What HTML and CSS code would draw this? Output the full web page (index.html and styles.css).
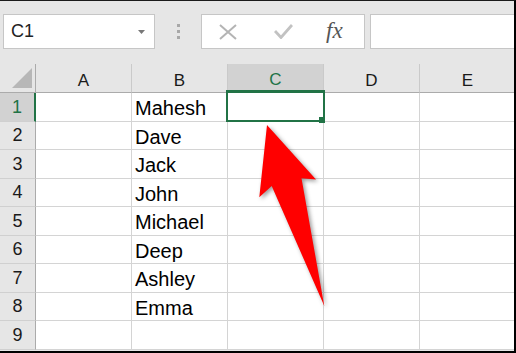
FILE: index.html
```html
<!DOCTYPE html>
<html>
<head>
<meta charset="utf-8">
<link rel="stylesheet" href="styles.css">
</head>
<body>
<div class="frame">
  <div class="toolbar">
    <div class="namebox">
      <span class="ref">C1</span>
      <svg class="caret" width="7" height="4" viewBox="0 0 7 4"><polygon points="0,0 7,0 3.5,4" fill="#777"/></svg>
    </div>
    <div class="grip"><i></i><i></i><i></i></div>
    <div class="fbuttons">
      <svg class="xicon" width="18" height="16" viewBox="0 0 18 16"><path d="M1 1 L17 15 M17 1 L1 15" stroke="#b4b4b4" stroke-width="2" fill="none"/></svg>
      <svg class="check" width="19" height="15" viewBox="0 0 19 15"><path d="M1 7 L7 13.5 L18 1" stroke="#c2c2c2" stroke-width="2.8" fill="none"/></svg>
      <span class="fx">fx</span>
    </div>
    <div class="finput"></div>
  </div>
  <div class="sheet">
    <div class="corner"><svg width="20" height="20" viewBox="0 0 20 20"><polygon points="0,20 20,0 20,20" fill="#b7b7b7"/></svg></div>
    <div class="ch">A</div>
    <div class="ch">B</div>
    <div class="ch sel">C</div>
    <div class="ch">D</div>
    <div class="ch">E</div>

    <div class="rh sel-row">1</div><div class="cell"></div><div class="cell">Mahesh</div><div class="cell c1"><div class="selbox"><span class="handle"></span></div></div><div class="cell"></div><div class="cell"></div>
    <div class="rh">2</div><div class="cell"></div><div class="cell">Dave</div><div class="cell"></div><div class="cell"></div><div class="cell"></div>
    <div class="rh">3</div><div class="cell"></div><div class="cell">Jack</div><div class="cell"></div><div class="cell"></div><div class="cell"></div>
    <div class="rh">4</div><div class="cell"></div><div class="cell">John</div><div class="cell"></div><div class="cell"></div><div class="cell"></div>
    <div class="rh">5</div><div class="cell"></div><div class="cell">Michael</div><div class="cell"></div><div class="cell"></div><div class="cell"></div>
    <div class="rh">6</div><div class="cell"></div><div class="cell">Deep</div><div class="cell"></div><div class="cell"></div><div class="cell"></div>
    <div class="rh">7</div><div class="cell"></div><div class="cell">Ashley</div><div class="cell"></div><div class="cell"></div><div class="cell"></div>
    <div class="rh">8</div><div class="cell"></div><div class="cell">Emma</div><div class="cell"></div><div class="cell"></div><div class="cell"></div>
    <div class="rh">9</div><div class="cell"></div><div class="cell"></div><div class="cell"></div><div class="cell"></div><div class="cell"></div>
  </div>
</div>
<svg class="arrow" width="516" height="353" viewBox="0 0 516 353">
  <polygon points="267,125 316,179.5 301.5,178.3 324.3,306 271.7,186 259.3,197.3" fill="#ff0000"/>
</svg>
</body>
</html>
```

FILE: styles.css
```css
* { box-sizing: border-box; }
html, body { margin: 0; padding: 0; }
body {
  width: 516px;
  height: 353px;
  position: relative;
  overflow: hidden;
  font-family: "Liberation Sans", Arial, sans-serif;
  background: #fff;
}
.frame {
  width: 516px;
  height: 353px;
  border-top: 1px solid #1a1a1a;
  border-right: 2px solid #000;
  border-bottom: 2px solid #000;
  background: #e6e6e6;
  overflow: hidden;
}
.toolbar {
  height: 63px;
  display: flex;
  align-items: flex-start;
  padding: 13px 0 0 3px;
}
.namebox {
  width: 152px;
  height: 35px;
  background: #fff;
  border: 1px solid #c6c6c6;
  display: flex;
  align-items: center;
  padding-left: 7px;
}
.ref {
  font-size: 18px;
  color: #222;
}
.caret {
  margin-left: auto;
  margin-right: 9px;
}
.grip {
  width: 46px;
  display: flex;
  flex-direction: column;
  align-items: center;
  gap: 3px;
  padding-top: 10px;
}
.grip i {
  display: block;
  width: 3px;
  height: 3px;
  background: #a8a8a8;
}
.fbuttons {
  width: 164px;
  height: 35px;
  background: #fff;
  border: 1px solid #c6c6c6;
  display: flex;
  align-items: center;
  padding-left: 17px;
}
.check { margin-left: 37px; }
.fx {
  margin-left: 33px;
  font-family: "Liberation Serif", "Times New Roman", serif;
  font-style: italic;
  font-size: 23px;
  color: #555;
  line-height: 1;
  position: relative;
  top: -1px;
}
.finput {
  flex: 1;
  margin-left: 5px;
  margin-right: -10px;
  height: 35px;
  background: #fff;
  border: 1px solid #c6c6c6;
}
.sheet {
  display: grid;
  grid-template-columns: 36px repeat(5, 96px);
  grid-template-rows: 29px repeat(9, 28.5px);
  background: #fff;
}
.corner {
  background: #e6e6e6;
  border-right: 1px solid #ababab;
  border-bottom: 1px solid #ababab;
  display: flex;
  justify-content: flex-end;
  align-items: flex-end;
  padding: 0 3px 4px 0;
}
.ch {
  background: #e6e6e6;
  border-right: 1px solid #cacaca;
  border-bottom: 1px solid #ababab;
  display: flex;
  align-items: center;
  justify-content: center;
  padding-top: 5px;
  font-size: 17px;
  color: #1a1a1a;
}
.ch.sel {
  background: #d2d2d2;
  color: #217346;
  border-bottom: 2px solid #217346;
}
.rh {
  background: #e6e6e6;
  border-right: 1px solid #ababab;
  border-bottom: 1px solid #d0d0d0;
  display: flex;
  align-items: center;
  justify-content: center;
  padding-top: 1px;
  font-size: 18px;
  color: #1a1a1a;
}
.rh.sel-row {
  background: #d2d2d2;
  color: #217346;
  border-right: 2px solid #217346;
}
.cell {
  border-right: 1px solid #d4d4d4;
  border-bottom: 1px solid #d4d4d4;
  font-size: 20px;
  line-height: 28px;
  padding: 1px 0 0 3px;
  color: #000;
  white-space: nowrap;
}
.c1 { position: relative; }
.selbox {
  position: absolute;
  left: -2px;
  top: -3px;
  width: 99px;
  height: 32px;
  border: 2px solid #217346;
  z-index: 2;
}
.handle {
  position: absolute;
  left: 91px;
  top: 25px;
  width: 6px;
  height: 6px;
  background: #217346;
}
.arrow {
  position: absolute;
  left: 0;
  top: 0;
  pointer-events: none;
  filter: drop-shadow(2px 2px 2px rgba(0, 0, 0, 0.4));
}
```
